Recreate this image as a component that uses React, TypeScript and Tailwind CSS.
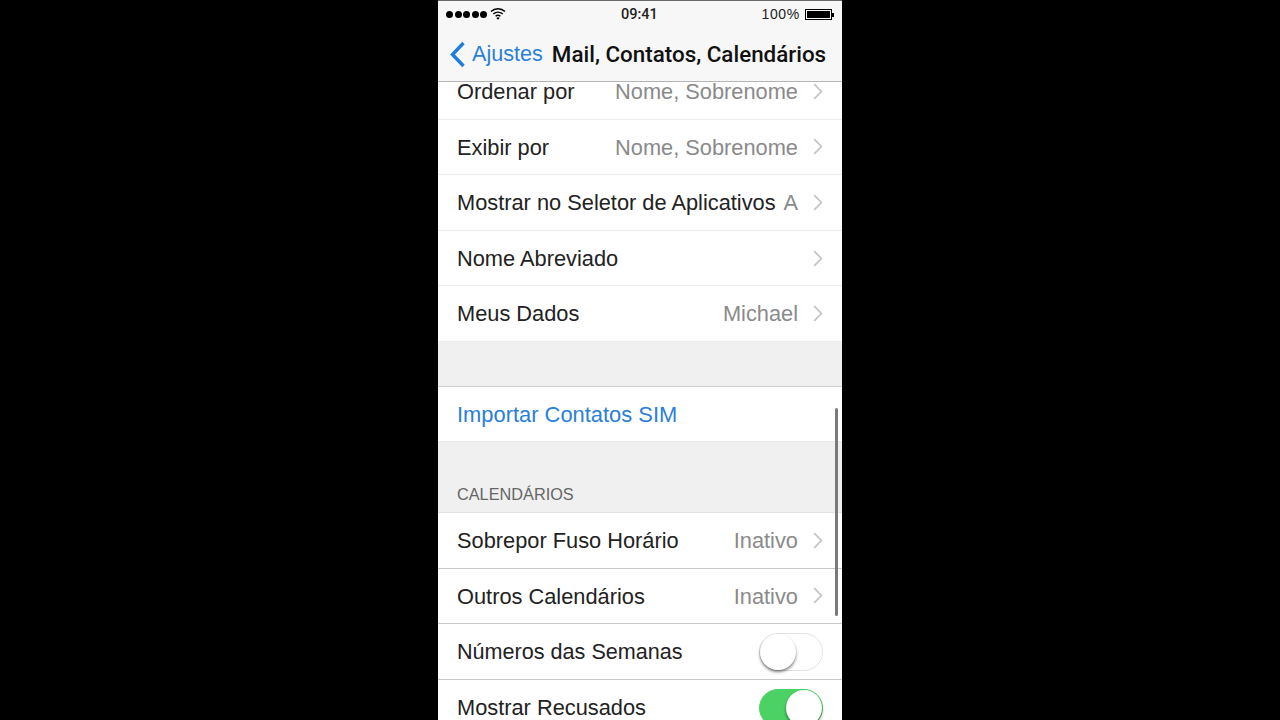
import React from "react";

const Chevron = () => (
  <svg width="10" height="17" viewBox="0 0 10 17" className="ml-[15px] shrink-0">
    <path d="M1.2 1.2 8.4 8.5 1.2 15.8" fill="none" stroke="#c3c3c8" strokeWidth="1.7" />
  </svg>
);

const Row = ({ label, value, line }: { label: string; value?: string; line?: boolean }) => (
  <div className={"h-[55.6px] flex items-center pl-[19px] pr-[19px] border-b bg-white " + (line ? "border-[#c8c8c8]" : "border-[#ececee]")}>
    <span className="pt-[2px] text-[21.8px] text-[#222] whitespace-nowrap">{label}</span>
    <span className="pt-[2px] flex-1 text-right text-[21.8px] text-[#8a8a8a] whitespace-nowrap">{value}</span>
    <Chevron />
  </div>
);

const Toggle = ({ on }: { on?: boolean }) => (
  <div className={"relative ml-auto w-[64px] h-[38px] rounded-full border " + (on ? "bg-[#4cd264] border-[#4cd264]" : "bg-white border-[#e3e3e3]")}>
    <div
      className={
        "absolute top-0 w-[36px] h-[36px] rounded-full bg-white shadow-[0_2px_3px_rgba(0,0,0,0.5)] " +
        (on ? "right-0" : "left-0")
      }
    />
  </div>
);

export default function App() {
  return (
    <div className="h-[720px] bg-black flex justify-center overflow-hidden font-['Liberation_Sans',Arial,sans-serif]">
      <div className="relative w-[404px] h-[720px] overflow-hidden bg-[#f0f0f0]">
        <div className="relative z-10 h-[82px] bg-[#f7f7f7] border-b border-[#b4b4b4] border-t border-t-[#6a6a6a]">
          <div className="h-[27px] flex items-center px-[8px] relative">
            <div className="flex items-center gap-[1.5px]">
              <span className="w-[7px] h-[7px] rounded-full bg-black" />
              <span className="w-[7px] h-[7px] rounded-full bg-black" />
              <span className="w-[7px] h-[7px] rounded-full bg-black" />
              <span className="w-[7px] h-[7px] rounded-full bg-black" />
              <span className="w-[7px] h-[7px] rounded-full bg-black" />
            </div>
            <svg width="16" height="13" viewBox="0 0 16 13" className="ml-[3px] mb-[2px]">
              <path d="M1 4.6a10 10 0 0 1 14 0M3.3 7a6.8 6.8 0 0 1 9.4 0M5.6 9.3a3.5 3.5 0 0 1 4.8 0" fill="none" stroke="#000" strokeWidth="1.4" />
              <path d="M8 12.8 6.3 11a2.4 2.4 0 0 1 3.4 0z" fill="#000" />
            </svg>
            <span className="absolute left-[183px] text-[14.5px] font-medium font-['Roboto',sans-serif] text-[#222]">09:41</span>
            <span className="ml-auto text-[14px] text-[#222] tracking-[0.7px]">100%</span>
            <div className="ml-[5px] w-[27px] h-[11px] border border-black p-[1px]">
              <div className="h-full bg-black" />
            </div>
            <div className="w-[2px] h-[4px] bg-black" />
          </div>
          <div className="flex items-center h-[53px] pl-[11px]">
            <svg width="17" height="27" viewBox="0 0 17 27">
              <path d="M14.5 2 3.5 13.5l11 11.5" fill="none" stroke="#1c7fe0" strokeWidth="3.4" />
            </svg>
            <span className="ml-[6px] text-[21.6px] text-[#2a80d8]">Ajustes</span>
            <span className="ml-[9px] pt-[1px] text-[22.4px] font-medium font-['Roboto',sans-serif] text-[#111] whitespace-nowrap">Mail, Contatos, Calendários</span>
          </div>
        </div>

        <div className="-mt-[18px]">
          <Row label="Ordenar por" value="Nome, Sobrenome" />
          <Row label="Exibir por" value="Nome, Sobrenome" />
          <Row label="Mostrar no Seletor de Aplicativos" value="A" />
          <Row label="Nome Abreviado" />
          <Row label="Meus Dados" value="Michael" />
          <div className="h-[45px] bg-[#f0f0f0] border-b border-[#cfcfcf]" />
          <div className="h-[55px] flex items-center pl-[19px] bg-white border-b border-[#e9e9e9]">
            <span className="pt-[2px] text-[21.9px] text-[#2a80d8]">Importar Contatos SIM</span>
          </div>
          <div className="h-[71px] bg-[#f0f0f0] border-b border-[#e2e2e2] flex items-end pl-[19px] pb-[6px]">
            <span className="text-[16.3px] text-[#666]">CALENDÁRIOS</span>
          </div>
          <Row label="Sobrepor Fuso Horário" value="Inativo" line />
          <Row label="Outros Calendários" value="Inativo" line />
          <div className="h-[56px] flex items-center pl-[19px] pr-[19px] bg-white border-b border-[#c8c8c8]">
            <span className="pt-[2px] text-[21.6px] text-[#222]">Números das Semanas</span>
            <Toggle />
          </div>
          <div className="h-[56px] flex items-center pl-[19px] pr-[19px] bg-white">
            <span className="text-[21.8px] text-[#222]">Mostrar Recusados</span>
            <Toggle on />
          </div>
        </div>

        <div className="absolute left-[397px] top-[408px] w-[3px] h-[208px] rounded-full bg-[#7a7a7a]" />
      </div>
    </div>
  );
}
